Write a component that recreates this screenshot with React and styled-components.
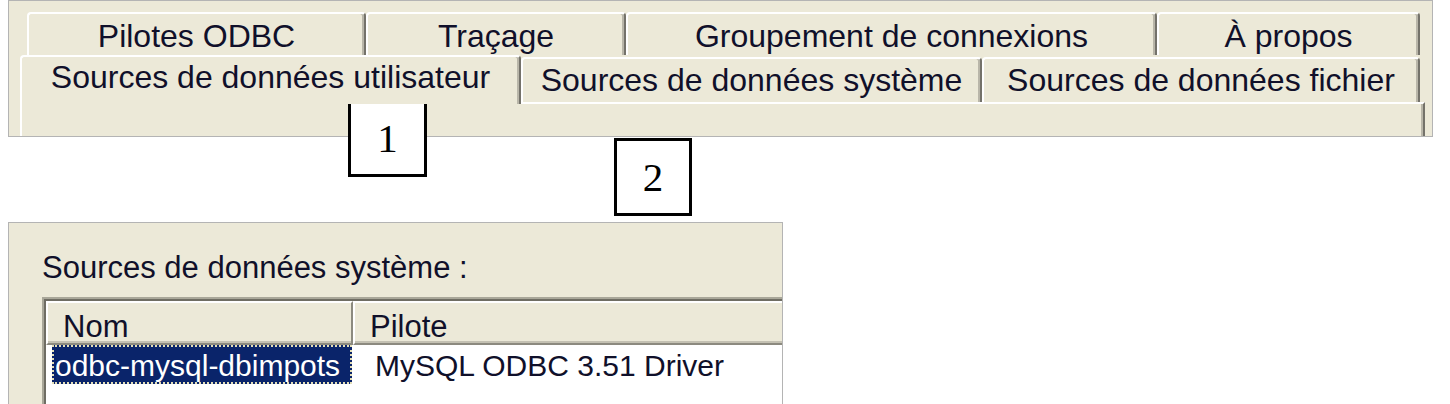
import styled, { createGlobalStyle } from "styled-components";

const GlobalStyle = createGlobalStyle`
  html, body {
    margin: 0;
    padding: 0;
    background: #ffffff;
  }
  body {
    font-family: "Liberation Sans", Arial, sans-serif;
    color: #10102a;
  }
`;

const Page = styled.div`
  position: relative;
  width: 1450px;
  height: 404px;
  overflow: hidden;
  background: #ffffff;
`;

const TopPanel = styled.div`
  box-sizing: border-box;
  margin-left: 8px;
  width: 1425px;
  height: 137px;
  border: 1px solid #b4b4b4;
  background: #ece9d8;
  padding: 11px 0 0 11px;
  overflow: hidden;
`;

const TabControl = styled.div`
  display: flex;
  flex-direction: column;
  width: 1405px;
`;

const BackRow = styled.div`
  display: flex;
  height: 43px;
  padding-left: 7px;
`;

const FrontRow = styled.div`
  position: relative;
  z-index: 1;
  display: flex;
  align-items: flex-end;
  height: 49px;
  margin-bottom: -2px;
`;

const Tab = styled.div`
  box-sizing: border-box;
  display: flex;
  justify-content: center;
  align-items: flex-start;
  width: ${(p) => p.$w}px;
  height: ${(p) => p.$h}px;
  margin-bottom: ${(p) => (p.$active ? 0 : p.$front ? 2 : 0)}px;
  padding-top: ${(p) => p.$pad}px;
  background: #ece9d8;
  border-top: 2px solid #ffffff;
  border-left: 2px solid #ffffff;
  border-right: 2px solid #74726a;
  box-shadow: inset -2px 0 0 #b9b6a9;
  border-radius: 4px 4px 0 0;
  font-size: 32px;
  line-height: 1;
  white-space: nowrap;
`;

const TabBody = styled.div`
  box-sizing: border-box;
  height: 40px;
  border-top: 2px solid #ffffff;
  border-left: 2px solid #ffffff;
  border-right: 2px solid #74726a;
  box-shadow: inset -2px 0 0 #b9b6a9;
`;

const BottomPanel = styled.div`
  box-sizing: border-box;
  margin: 85px 0 0 8px;
  width: 775px;
  height: 190px;
  border: 1px solid #b4b4b4;
  background: #ece9d8;
  padding: 29px 0 0 33px;
  overflow: hidden;
`;

const Label = styled.div`
  font-size: 31px;
  line-height: 1;
  white-space: nowrap;
`;

const ListView = styled.div`
  box-sizing: border-box;
  margin-top: 14px;
  width: 820px;
  height: 140px;
  background: #ffffff;
  border-top: 2px solid #a9a799;
  border-left: 2px solid #a9a799;
  box-shadow: inset 2px 2px 0 #6f6d63;
  padding: 2px 0 0 2px;
`;

const HeaderRow = styled.div`
  display: flex;
  height: 44px;
`;

const HeaderCell = styled.div`
  box-sizing: border-box;
  width: ${(p) => (p.$w ? `${p.$w}px` : "auto")};
  flex: ${(p) => (p.$w ? "none" : "1")};
  height: 44px;
  padding: 8px 0 0 15px;
  background: #ece9d8;
  border-top: 2px solid #ffffff;
  border-left: 2px solid #ffffff;
  border-bottom: 2px solid #8c8a7f;
  border-right: 2px solid #8c8a7f;
  box-shadow: inset 0 -2px 0 #c4c1b3;
  font-size: 31px;
  line-height: 1;
  white-space: nowrap;
`;

const DataRow = styled.div`
  display: flex;
  align-items: flex-start;
  height: 40px;
  padding-left: 6px;
`;

const Cell = styled.div`
  box-sizing: border-box;
  height: 39px;
  padding: 4px 0 0 ${(p) => (p.$selected ? 1 : 0)}px;
  margin-left: ${(p) => p.$gap || 0}px;
  width: ${(p) => (p.$w ? `${p.$w}px` : "auto")};
  background: ${(p) => (p.$selected ? "#0a246a" : "transparent")};
  color: ${(p) => (p.$selected ? "#ffffff" : "#10102a")};
  border: 2px ${(p) => (p.$selected ? "dotted #e4dfb8" : "solid transparent")};
  font-size: 30px;
  line-height: 1;
  white-space: nowrap;
`;

const Marker = styled.div`
  position: absolute;
  left: ${(p) => p.$x}px;
  top: ${(p) => p.$y}px;
  box-sizing: border-box;
  width: ${(p) => p.$w}px;
  height: ${(p) => p.$h}px;
  display: flex;
  align-items: center;
  justify-content: center;
  background: #ffffff;
  border: 3px solid #000000;
  font-family: "Liberation Serif", "Times New Roman", serif;
  font-size: 41px;
  line-height: 1;
  color: #000000;
`;

const backTabs = [
  { label: "Pilotes ODBC", w: 339 },
  { label: "Traçage", w: 260 },
  { label: "Groupement de connexions", w: 531 },
  { label: "À propos", w: 263 },
];

const frontTabs = [
  { label: "Sources de données utilisateur", w: 501, active: true },
  { label: "Sources de données système", w: 461 },
  { label: "Sources de données fichier", w: 438 },
];

export default function App() {
  return (
    <Page>
      <GlobalStyle />
      <TopPanel>
        <TabControl>
          <BackRow>
            {backTabs.map((t) => (
              <Tab key={t.label} $w={t.w} $h={43} $pad={6}>
                {t.label}
              </Tab>
            ))}
          </BackRow>
          <FrontRow>
            {frontTabs.map((t) => (
              <Tab
                key={t.label}
                $w={t.w}
                $h={t.active ? 49 : 45}
                $pad={t.active ? 4 : 5}
                $front
                $active={t.active}
              >
                {t.label}
              </Tab>
            ))}
          </FrontRow>
          <TabBody />
        </TabControl>
      </TopPanel>

      <BottomPanel>
        <Label>Sources de données système :</Label>
        <ListView>
          <HeaderRow>
            <HeaderCell $w={307}>Nom</HeaderCell>
            <HeaderCell>Pilote</HeaderCell>
          </HeaderRow>
          <DataRow>
            <Cell $selected $w={300}>
              odbc-mysql-dbimpots
            </Cell>
            <Cell $gap={21}>MySQL ODBC 3.51 Driver</Cell>
          </DataRow>
        </ListView>
      </BottomPanel>

      <Marker $x={348} $y={100} $w={79} $h={77}>
        1
      </Marker>
      <Marker $x={614} $y={138} $w={78} $h={78}>
        2
      </Marker>
    </Page>
  );
}
